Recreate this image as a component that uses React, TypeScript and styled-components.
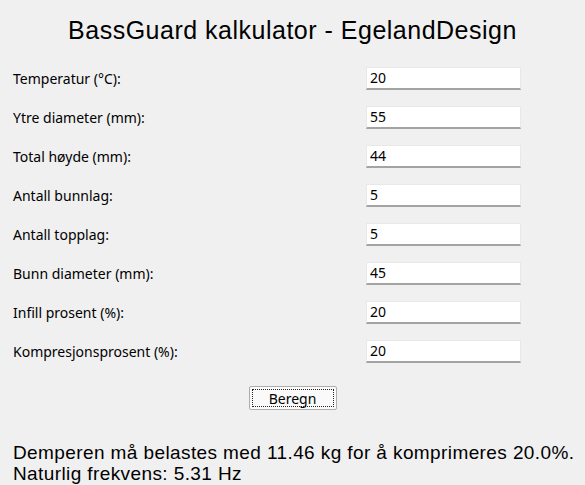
import styled, { createGlobalStyle } from "styled-components";

const GlobalStyle = createGlobalStyle`
  html, body {
    margin: 0;
    padding: 0;
    background: #f0f0f0;
  }
  body {
    font-family: "Noto Sans", "Open Sans", sans-serif;
  }
`;

interface Field {
  label: string;
  value: string;
}

const fields: Field[] = [
  { label: "Temperatur (°C):", value: "20" },
  { label: "Ytre diameter (mm):", value: "55" },
  { label: "Total høyde (mm):", value: "44" },
  { label: "Antall bunnlag:", value: "5" },
  { label: "Antall topplag:", value: "5" },
  { label: "Bunn diameter (mm):", value: "45" },
  { label: "Infill prosent (%):", value: "20" },
  { label: "Kompresjonsprosent (%):", value: "20" },
];

export default function App() {
  return (
    <Window>
      <GlobalStyle />
      <Title>BassGuard kalkulator - EgelandDesign</Title>
      <Form>
        {fields.map((f) => (
          <Row key={f.label}>
            <Label>{f.label}</Label>
            <Entry defaultValue={f.value} />
          </Row>
        ))}
      </Form>
      <ButtonRow>
        <CalcButton>
          <FocusRing>Beregn</FocusRing>
        </CalcButton>
      </ButtonRow>
      <Result>
        Demperen må belastes med 11.46 kg for å komprimeres 20.0%.
        <br />
        Naturlig frekvens: 5.31 Hz
      </Result>
    </Window>
  );
}

const Window = styled.div`
  width: 585px;
  height: 485px;
  box-sizing: border-box;
  padding-top: 14px;
  overflow: hidden;
`;

const Title = styled.h1`
  margin: 0;
  text-align: center;
  font-family: "Liberation Sans", Arial, sans-serif;
  font-weight: normal;
  font-size: 25px;
  letter-spacing: 0.5px;
  line-height: 32px;
  color: #000;
`;

const Form = styled.div`
  display: flex;
  flex-direction: column;
  gap: 16px;
  margin-top: 21px;
  padding-left: 13px;
`;

const Row = styled.div`
  display: grid;
  grid-template-columns: 353px 155px;
  align-items: center;
  height: 23px;
`;

const Label = styled.span`
  font-size: 14px;
  color: #000;
`;

const Entry = styled.input`
  box-sizing: border-box;
  width: 155px;
  height: 23px;
  margin: 0;
  padding: 0 3px 1px;
  border: 1px solid #e8e8e8;
  border-bottom: 2px solid #a3a3a3;
  background: #fff;
  font-family: "Noto Sans", "Open Sans", sans-serif;
  font-size: 14px;
  color: #000;
  outline: none;
`;

const ButtonRow = styled.div`
  display: flex;
  justify-content: center;
  margin-top: 23px;
`;

const CalcButton = styled.button`
  box-sizing: border-box;
  width: 88px;
  height: 24px;
  padding: 2px;
  border: 1px solid #adadad;
  border-radius: 2px;
  background: #fafafa;
  cursor: pointer;
`;

const FocusRing = styled.span`
  display: flex;
  align-items: center;
  justify-content: center;
  height: 100%;
  box-sizing: border-box;
  border: 1px dotted #222;
  font-family: "Noto Sans", "Open Sans", sans-serif;
  font-size: 14px;
  color: #000;
`;

const Result = styled.p`
  margin: 32px 0 0 13px;
  font-family: "Liberation Sans", Arial, sans-serif;
  font-size: 19px;
  letter-spacing: 0.4px;
  line-height: 21px;
  color: #000;
`;
